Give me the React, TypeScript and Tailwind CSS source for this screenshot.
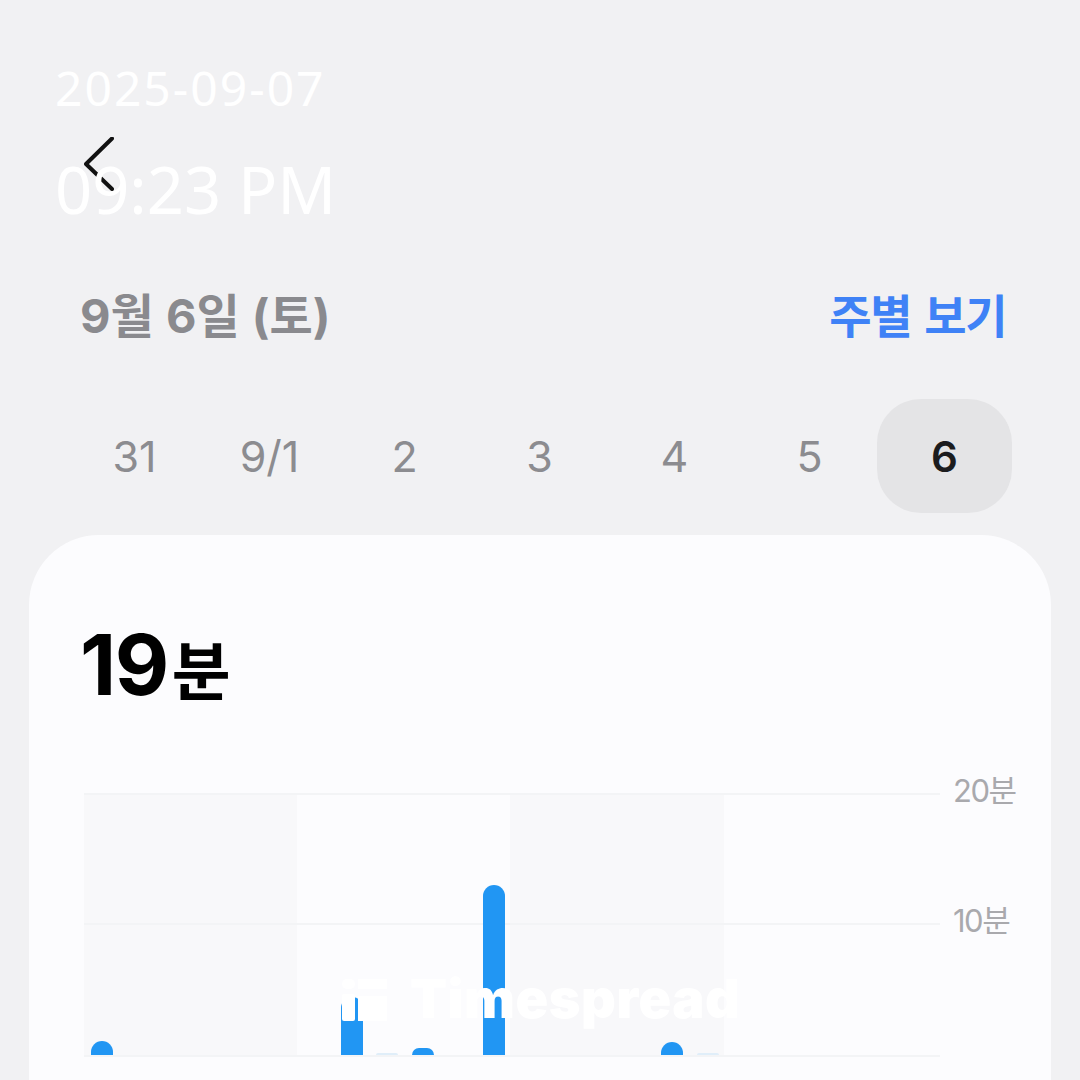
const days = ["31", "9/1", "2", "3", "4", "5"];

const bars = [
  { left: 7, width: 22, height: 14, color: "bg-[#2196f3]" },
  { left: 257, width: 22, height: 58, color: "bg-[#2196f3]" },
  { left: 292, width: 22, height: 2, color: "bg-[#e0eef9]" },
  { left: 328, width: 22, height: 7, color: "bg-[#2196f3]" },
  { left: 399, width: 22, height: 170, color: "bg-[#2196f3]" },
  { left: 577, width: 22, height: 13, color: "bg-[#2196f3]" },
  { left: 613, width: 22, height: 2, color: "bg-[#e0eef9]" },
];

const font = "font-['Inter','Noto_Sans_CJK_KR',sans-serif]";

const App = () => {
  return (
    <div className={`relative h-[1080px] w-[1080px] overflow-hidden bg-[#f1f1f3] ${font}`}>
      {/* time stamp burned into the capture */}
      <div className="absolute left-[55px] top-[52px] z-10 flex flex-col gap-[21px] font-['Noto_Sans',sans-serif] text-white">
        <p className="text-[48px] leading-[72px] tracking-[2px]">2025-09-07</p>
        <p className="text-[65px] leading-[88px]">09:23 PM</p>
      </div>

      <div className="flex flex-col">
        <div className="flex h-[272px] items-start pl-[84px] pt-[137px]">
          <svg width="30" height="54" viewBox="0 0 30 54" fill="none">
            <path d="M28 1.500 L2 27 L28 52" stroke="#111" strokeWidth="4" strokeLinecap="round" strokeLinejoin="round" />
          </svg>
        </div>

        <div className="flex h-[88px] items-center justify-between pl-[80px] pr-[74px]">
          <h1 className="text-[47px] font-bold [word-spacing:1px] text-[#8a8a8e]">9월 6일 (토)</h1>
          <button className="text-[46px] font-bold tracking-[-1.5px] [word-spacing:4px] text-[#3f82f6]">주별 보기</button>
        </div>

        <div className="mt-[39px] flex pl-[67px] pr-[68px]">
          {days.map((day) => (
            <div key={day} className="flex h-[114px] w-[135px] items-center justify-center text-[43px] text-[#8c8c90]">
              {day}
            </div>
          ))}
          <div className="flex h-[114px] w-[135px] items-center justify-center rounded-[44px] bg-[#e4e4e6] text-[42px] font-semibold text-[#1c1c1e]">
            6
          </div>
        </div>

        <div className="mx-[29px] mt-[22px] h-[600px] rounded-t-[70px] bg-[#fcfcfe] px-[51px] pt-[82px]">
          <div className="flex items-baseline font-bold text-black">
            <span className="text-[84px] leading-[96px] tracking-[-1.5px]">19</span>
            <span className="ml-[4px] text-[64px] leading-[96px]">분</span>
          </div>

          <div className="relative mt-[73px] ml-[4px] h-[264px] w-[856px] border-y-2 border-[#f3f4f6]">
            <div className="grid h-full grid-cols-[213px_213px_214px_1fr]">
              <div className="bg-[#f8f8fa]" />
              <div />
              <div className="bg-[#f8f8fa]" />
              <div />
            </div>
            <div className="absolute inset-x-0 top-[128px] h-[2px] bg-[#f3f4f6]" />
            {bars.map((bar) => (
              <div
                key={bar.left}
                className={`absolute bottom-0 rounded-t-full ${bar.color}`}
                style={{ left: bar.left, width: bar.width, height: bar.height }}
              />
            ))}
            <span className="absolute left-[869px] top-[-27px] whitespace-nowrap text-[31px] tracking-[-1.5px] text-[#a9a9ad]">20분</span>
            <span className="absolute left-[869px] top-[103px] whitespace-nowrap text-[31px] tracking-[-1.5px] text-[#a9a9ad]">10분</span>
          </div>
        </div>
      </div>

      {/* watermark */}
      <div className="absolute left-[342px] top-[963px] z-10 flex items-center gap-[23px] text-white">
        <svg width="45" height="44" viewBox="0 0 45 44" fill="white" className="mt-[4px]">
          <rect x="0" y="0" width="13" height="10" rx="5" />
          <rect x="0" y="15" width="13" height="27" rx="2" />
          <rect x="16" y="0" width="29" height="10" />
          <rect x="16" y="17" width="29" height="25" />
        </svg>
        <span className="font-['Inter',sans-serif] text-[54px] font-black leading-[72px] tracking-[0.5px]">Timespread</span>
      </div>
    </div>
  );
};

export default App;
